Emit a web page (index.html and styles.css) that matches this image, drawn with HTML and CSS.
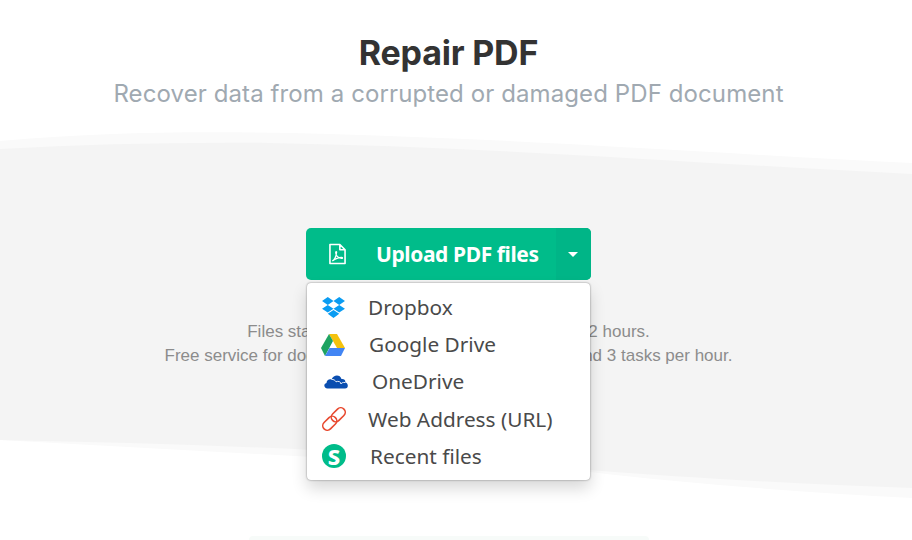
FILE: index.html
```html
<!DOCTYPE html>
<html lang="en">
<head>
<meta charset="utf-8">
<title>Repair PDF</title>
<link rel="stylesheet" href="styles.css">
</head>
<body>
<svg class="backdrop" viewBox="0 0 912 540" aria-hidden="true">
  <path class="wave-light" d="M0 141C110 131 220 131 330 134C540 140 740 155 912 163V498C800 492 690 484 590 472L0 440Z"/>
  <path class="wave-main" d="M0 149C90 144 180 142 270 143C500 147 720 165 912 174V488C800 484 690 478 590 470C380 450 200 444 0 440Z"/>
</svg>
<main class="page">
  <h1 class="title">Repair PDF</h1>
  <p class="subtitle">Recover data from a corrupted or damaged PDF document</p>
  <div class="upload">
    <div class="upload-btn">
      <span class="upload-main">
        <svg class="pdf-icon" viewBox="0 0 18 22" aria-hidden="true">
          <path d="M1 1h10.500L17 6.500V21H1z M11.500 1v5.500H17" fill="none" stroke="#fff" stroke-width="1.700" stroke-linejoin="round"/>
          <path d="M3.500 18.500c2.500-1.500 4-5 4.500-9c.3-1.500-1-1.500-.9 0c.3 3 2.500 5.500 6 6.200c1.700.2 1.700-1.200 0-1.200c-3.500 0-7 2-9.600 4z" fill="none" stroke="#fff" stroke-width="1.300"/>
        </svg>
        <span class="upload-label">Upload PDF files</span>
      </span>
      <span class="upload-caret"><i class="caret"></i></span>
    </div>
    <ul class="menu">
      <li class="menu-item">
        <svg class="ico ico-dropbox" viewBox="0 0 24 22" aria-hidden="true">
          <path fill="#0a9cf2" d="M6 0L0 4.300l6 4L12 4.300zM18 0l-6 4.300 6 4 6-4zM0 12.300l6 4 6-4-6-4zM18 8.300l-6 4 6 4 6-4zM6 17.500l6 4.500 6-4.500-6-4z"/>
        </svg>
        <span>Dropbox</span>
      </li>
      <li class="menu-item">
        <svg class="ico ico-drive" viewBox="0 0 24 22" aria-hidden="true">
          <path fill="#f4c20d" d="M8 0h8l8 14h-8z"/>
          <path fill="#1ea362" d="M8 0l4 7-8 15-4-8z"/>
          <path fill="#4285f4" d="M8.500 14H24l-4 8H4z"/>
        </svg>
        <span>Google Drive</span>
      </li>
      <li class="menu-item">
        <svg class="ico ico-onedrive" viewBox="0 0 24 15" aria-hidden="true">
          <path fill="#0a4eb0" d="M3.500 14.500C0 14.500-1 10 2.500 9C2.500 6 5.500 4.500 7.500 5.500C9.500.5 16 0 17.500 5C20.500 4.500 22 7 21 8.500C24.500 8.500 25 14.500 21 14.500z"/>
          <path fill="none" stroke="#fff" stroke-width=".9" d="M7.500 5.500c2-.3 3.700.7 4.500 2.300c2-1 5-.3 5 2.200c.3-1 1.800-1.800 4-1.500"/>
        </svg>
        <span>OneDrive</span>
      </li>
      <li class="menu-item">
        <svg class="ico ico-link" viewBox="0 0 24 24" aria-hidden="true">
          <g fill="none" stroke="#e8492f" stroke-width="1.600" transform="rotate(-45 12 12)">
            <rect x="-2" y="7.500" width="16" height="9" rx="4.500"/>
            <rect x="10" y="7.500" width="16" height="9" rx="4.500"/>
          </g>
        </svg>
        <span>Web Address (URL)</span>
      </li>
      <li class="menu-item">
        <span class="ico-recent">S</span>
        <span>Recent files</span>
      </li>
    </ul>
  </div>
  <p class="note">Files stay private. Automatically deleted after 2 hours.<br>Free service for documents up to 200 pages or 50 Mb and 3 tasks per hour.</p>
  <div class="peek"></div>
</main>
</body>
</html>
```
FILE: styles.css
```css
html, body {
  margin: 0;
  height: 540px;
  overflow: hidden;
  background: #fff;
}

.backdrop {
  position: absolute;
  left: 0;
  top: 0;
  width: 912px;
  height: 540px;
}

.wave-light { fill: #fafafa; }
.wave-main { fill: #f4f4f4; }

.page {
  position: relative;
  width: 897px;
  height: 540px;
  box-sizing: border-box;
  display: flex;
  flex-direction: column;
  align-items: center;
  padding-top: 32px;
}

.title {
  margin: 0;
  font: 700 34px/42px Inter, sans-serif;
  letter-spacing: -0.2px;
  color: #333;
}

.subtitle {
  margin: 3px 0 0;
  font: 400 24px/34px Inter, sans-serif;
  letter-spacing: 0.1px;
  color: #a0a9b1;
}

.upload {
  position: relative;
  margin-top: 117px;
}

.upload-btn {
  display: flex;
  width: 285px;
  height: 52px;
  border-radius: 5px;
  background: #00bc8a;
  color: #fff;
  overflow: hidden;
}

.upload-main {
  flex: 1;
  display: flex;
  align-items: center;
  padding-left: 23px;
}

.pdf-icon {
  width: 17px;
  height: 22px;
}

.upload-label {
  margin-left: 30px;
  font: 700 21px/1 "Noto Sans", sans-serif;
  letter-spacing: -0.4px;
  white-space: nowrap;
}

.upload-caret {
  width: 35px;
  display: flex;
  align-items: center;
  justify-content: center;
  padding-right: 2px;
  box-sizing: border-box;
  background: #00b587;
}

.caret {
  border: 5px solid transparent;
  border-top-color: #fff;
  border-bottom: 0;
}

.menu {
  position: absolute;
  left: 1px;
  top: 55px;
  width: 283px;
  height: 197px;
  box-sizing: border-box;
  margin: 0;
  padding: 6px 0 5px 15px;
  list-style: none;
  background: #fff;
  border-radius: 4px;
  box-shadow: 0 0 2px rgba(0, 0, 0, .5), 0 8px 16px rgba(0, 0, 0, .16);
  font: 400 20.800px/37.2px "Noto Sans", sans-serif;
  color: #4a4a4a;
}

.menu-item {
  display: flex;
  align-items: center;
  height: 37.2px;
  white-space: nowrap;
}

.ico { flex: none; }

.ico-dropbox { width: 23px; height: 21px; margin-right: 23px; }
.ico-drive { width: 24px; height: 22px; margin-left: -1px; margin-right: 24px; }
.ico-onedrive { width: 24px; height: 15px; margin-left: 2px; margin-right: 24px; }
.ico-link { width: 24px; height: 24px; margin-right: 22px; }

.ico-recent {
  flex: none;
  width: 24px;
  height: 24px;
  margin-right: 24px;
  border-radius: 50%;
  background: #00bc8a;
  color: #fff;
  font: 800 22px/24px "Noto Sans", sans-serif;
  text-align: center;
}

.note {
  margin: 40px 0 0;
  font: 400 17px/24px "Liberation Sans", sans-serif;
  color: #8c8c8c;
  text-align: center;
}

.peek {
  flex: none;
  width: 400px;
  height: 4px;
  margin-top: 168px;
  border-radius: 8px 8px 0 0;
  background: #f7fbf9;
}
```
